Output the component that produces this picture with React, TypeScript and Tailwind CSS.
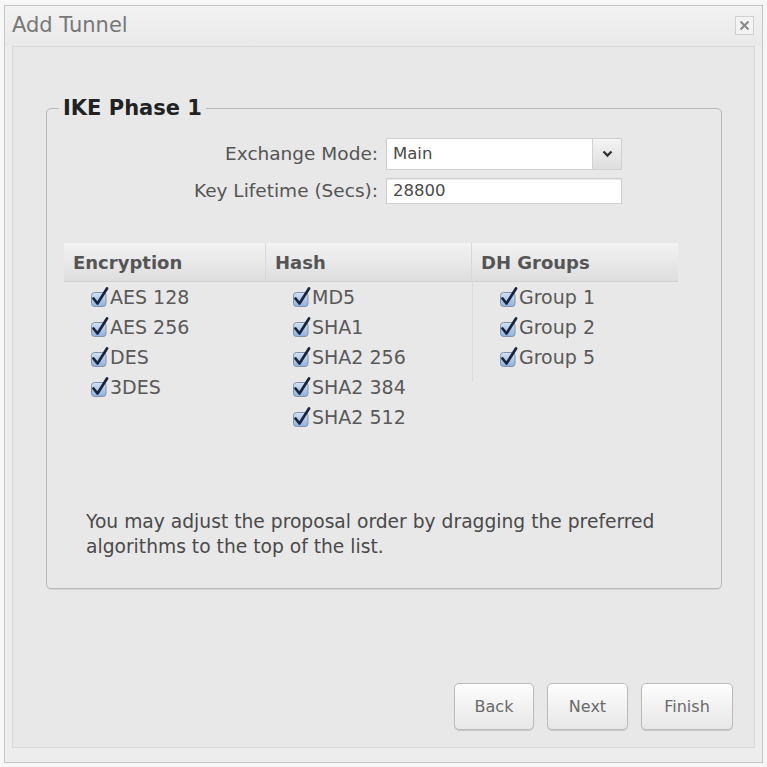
import React from "react";

const font = { fontFamily: '"DejaVu Sans", Verdana, sans-serif' };

function Check() {
  return (
    <svg width="19" height="20" viewBox="0 0 19 20" className="shrink-0">
      <defs>
        <linearGradient id="cbg" x1="0" y1="0" x2="0" y2="1">
          <stop offset="0" stopColor="#d4e2f3" />
          <stop offset="1" stopColor="#8eb0dc" />
        </linearGradient>
      </defs>
      <rect x="1.5" y="5.5" width="14.5" height="14" rx="3" fill="url(#cbg)" stroke="#8293ab" />
      <path d="M3.5 11.5 L7.5 16.5 L17 1.5" fill="none" stroke="#17253f" strokeWidth="2.7" strokeLinecap="round" strokeLinejoin="round" />
    </svg>
  );
}

function Item({ label }: { label: string }) {
  return (
    <div className="flex h-[30px] items-center gap-[1px] text-[19px] text-[#595959]">
      <Check />
      <span>{label}</span>
    </div>
  );
}

function Column({ title, items, last, border }: { title: string; items: string[]; last?: boolean; border?: boolean }) {
  return (
    <div className="flex flex-col">
      <div
        className={`flex h-[39px] items-center px-[9px] text-[18px] font-bold text-[#555] bg-gradient-to-b from-[#f3f3f3] to-[#dedede] border-b border-[#d0d0d0] ${last ? "" : "border-r border-r-[#d8d8d8]"}`}
      >
        {title}
      </div>
      <div className={`pl-[26px] pb-[10px] ${border ? "border-l border-[#dcdcdc]" : ""}`}>
        {items.map((it) => (
          <Item key={it} label={it} />
        ))}
      </div>
    </div>
  );
}

function Btn({ label, w }: { label: string; w: string }) {
  return (
    <button
      className={`${w} h-[47px] rounded-[5px] border border-[#bcbcbc] bg-gradient-to-b from-[#fdfdfd] to-[#e7e7e7] text-[16px] text-[#6a6a6a] shadow-[0_1px_1px_rgba(0,0,0,0.15)]`}
    >
      {label}
    </button>
  );
}

export default function App() {
  return (
    <div className="w-[767px] h-[767px] bg-[#f7f7f7] pt-[5px] pl-[4px]" style={font}>
      <div className="w-[759px] h-[758px] border border-[#c6c6c6] bg-[#ededed] flex flex-col">
        <div className="h-[40px] flex items-center justify-between pl-[7px] pr-[8px] bg-gradient-to-b from-[#f2f2f2] to-[#e9e9e9]">
          <span className="text-[21px] text-[#777]">Add Tunnel</span>
          <div className="w-[19px] h-[19px] border border-[#d0d0d0] bg-[#f3f3f3] flex items-center justify-center mt-[-2px]">
            <svg width="11" height="11" viewBox="0 0 11 11">
              <path d="M1.5 1.5 L9.5 9.5 M9.5 1.5 L1.5 9.5" stroke="#8a8a8a" strokeWidth="2" />
            </svg>
          </div>
        </div>
        <div className="mx-[7px] mb-[14px] flex-1 border border-[#d8d8d8] bg-[#e8e8e8] flex flex-col">
          <fieldset className="ml-[33px] mt-[48px] w-[676px] h-[494px] border border-[#b9b9b9] rounded-[5px] shadow-[0_1px_1px_rgba(0,0,0,0.08)]">
            <legend className="ml-[12px] px-[4px] text-[21px] font-bold text-[#222] leading-[26px]">IKE Phase 1</legend>
            <div className="flex flex-col gap-[8px] mt-[17px] text-[18.5px] text-[#555]">
              <div className="flex items-center gap-[8px]">
                <div className="w-[331px] text-right leading-[26px]">Exchange Mode:</div>
                <div className="w-[236px] h-[32px] border border-[#cfcfcf] bg-white flex">
                  <div className="flex-1 flex items-center pl-[6px] text-[16.5px] text-[#4a4a4a]">Main</div>
                  <div className="w-[29px] border-l border-[#d2d2d2] bg-gradient-to-b from-[#f4f4f4] to-[#dedede] flex items-center justify-center">
                    <svg width="11" height="8" viewBox="0 0 11 8">
                      <path d="M1.5 1.5 L5.5 5.5 L9.5 1.5" fill="none" stroke="#333" strokeWidth="2.4" />
                    </svg>
                  </div>
                </div>
              </div>
              <div className="flex items-center gap-[8px]">
                <div className="w-[331px] text-right leading-[26px]">Key Lifetime (Secs):</div>
                <div className="w-[236px] h-[26px] border border-[#cfcfcf] bg-white flex items-center pl-[6px] text-[16.5px] text-[#4a4a4a] shadow-[inset_0_1px_1px_rgba(0,0,0,0.08)]">
                  28800
                </div>
              </div>
            </div>
            <div className="ml-[17px] mt-[39px] w-[614px] grid grid-cols-[202px_206px_206px] items-start">
              <Column title="Encryption" items={["AES 128", "AES 256", "DES", "3DES"]} />
              <Column title="Hash" items={["MD5", "SHA1", "SHA2 256", "SHA2 384", "SHA2 512"]} />
              <Column title="DH Groups" items={["Group 1", "Group 2", "Group 5"]} last border />
            </div>
            <p className="ml-[39px] mt-[67px] text-[18.7px] leading-[25px] text-[#4a4a4a]">
              You may adjust the proposal order by dragging the preferred
              <br />
              algorithms to the top of the list.
            </p>
          </fieldset>
          <div className="flex-1" />
          <div className="flex justify-end gap-[13px] pr-[21px] pb-[17px]">
            <Btn label="Back" w="w-[80px]" />
            <Btn label="Next" w="w-[81px]" />
            <Btn label="Finish" w="w-[92px]" />
          </div>
        </div>
      </div>
    </div>
  );
}
